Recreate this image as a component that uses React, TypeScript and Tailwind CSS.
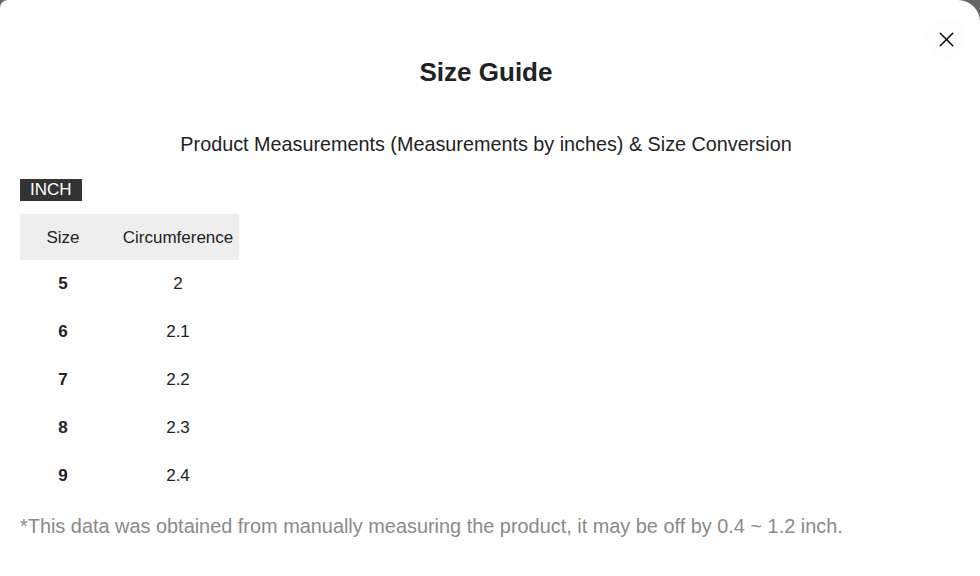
import { X } from 'lucide-react';

const rows = [
  { size: '5', circ: '2' },
  { size: '6', circ: '2.1' },
  { size: '7', circ: '2.2' },
  { size: '8', circ: '2.3' },
  { size: '9', circ: '2.4' },
];

const SizeGuide = () => {
  return (
    <div className="h-[576px] w-[980px] overflow-hidden bg-[#666666]">
      <div
        className="relative h-full w-full rounded-tl-[8px] rounded-tr-[22px] bg-white pl-5 pr-[28px] text-[#222]"
        style={{ fontFamily: '"Liberation Sans", Arial, sans-serif' }}
      >
        <button className="absolute right-[14px] top-[19px] flex h-10 w-10 items-center justify-center rounded-full bg-[#fdfdfd]">
          <X className="h-[25px] w-[25px] text-[#111]" strokeWidth={1.5} />
        </button>

        <h2 className="pt-[56px] text-center text-[26px] font-bold leading-[32px] text-[#222]">Size Guide</h2>

        <p className="mt-[44px] text-center text-[19.8px] leading-[24px] text-[#222]">
          Product Measurements (Measurements by inches) &amp; Size Conversion
        </p>

        <div className="mt-[23px] inline-block bg-[#333] px-[10px] text-[17px] leading-[22px] text-white">INCH</div>

        <table className="mt-[12px] border-collapse text-[17px]">
          <thead>
            <tr className="bg-[#eeeeee]">
              <th className="h-[46px] w-[86px] p-0 pt-[2px] text-center font-normal">Size</th>
              <th className="h-[46px] w-[133px] p-0 pl-[11px] pt-[2px] text-center font-normal">Circumference</th>
            </tr>
          </thead>
          <tbody>
            {rows.map((r) => (
              <tr key={r.size}>
                <td className="h-[48px] p-0 text-center font-bold">{r.size}</td>
                <td className="h-[48px] p-0 pl-[11px] text-center">{r.circ}</td>
              </tr>
            ))}
          </tbody>
        </table>

        <p className="mt-[13px] text-[19.9px] leading-[26px] text-[#8a8a8a]">
          *This data was obtained from manually measuring the product, it may be off by 0.4 ~ 1.2 inch.
        </p>
      </div>
    </div>
  );
};

export default function App() {
  return <SizeGuide />;
}
